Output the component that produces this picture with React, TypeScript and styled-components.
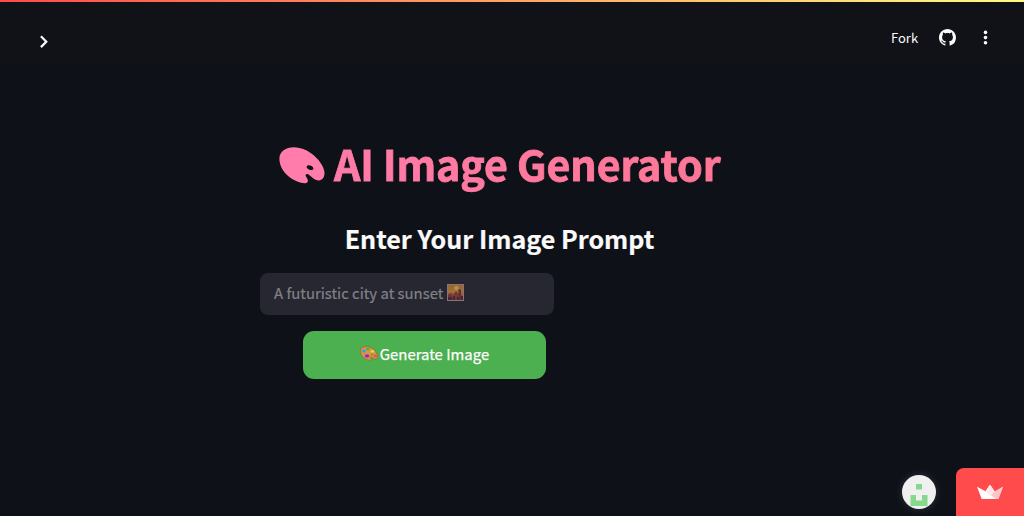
import React from "react";
import styled, { createGlobalStyle } from "styled-components";

const GlobalStyle = createGlobalStyle`
  * { box-sizing: border-box; }
  body {
    margin: 0;
    background: #0e1117;
    color: #fafafa;
    font-family: "Noto Sans CJK JP", "Noto Sans", sans-serif;
    overflow: hidden;
  }
`;

const Page = styled.div`
  display: flex;
  flex-direction: column;
  height: 516px;
`;

const Rainbow = styled.div`
  height: 2px;
  flex: none;
  background: linear-gradient(90deg, #ff4b4b, #fffd80);
`;

const Header = styled.header`
  display: flex;
  flex: none;
  justify-content: space-between;
  height: 62px;
  padding: 0 32px 0 37px;
  background: #111217;
`;

const IconButton = styled.button<{ $top: number; $size: number }>`
  display: flex;
  width: ${(p) => p.$size}px;
  height: ${(p) => p.$size}px;
  margin: ${(p) => p.$top}px 0 0;
  padding: 0;
  border: 0;
  background: none;
  color: #fafafa;
`;

const Toolbar = styled.div`
  display: flex;
`;

const ForkLink = styled.span`
  width: 48px;
  margin-top: 26px;
  font-size: 13px;
  line-height: 20px;
  white-space: nowrap;
`;

const Main = styled.main`
  display: flex;
  flex-direction: column;
  width: 480px;
  margin: 74px 0 0 260px;
`;

const Title = styled.h1`
  display: flex;
  align-items: flex-start;
  justify-content: center;
  height: 60px;
  margin: 0 0 -6px;
  font-size: 41.2px;
  line-height: 50px;
  letter-spacing: -0.1px;
  font-weight: 700;
  white-space: nowrap;
  color: transparent;
  -webkit-text-stroke: 0.9px transparent;
  background: linear-gradient(90deg, #ff7cab, #ff7695);
  background-clip: text;
  -webkit-background-clip: text;
`;

const TitleIcon = styled.svg`
  flex: none;
  margin: 9px 8.500px 0 0;
`;

const Subtitle = styled.h3`
  margin: 28px 0 0;
  height: 40px;
  font-size: 25.1px;
  line-height: 36px;
  font-weight: 700;
  text-align: center;
  white-space: nowrap;
  padding-right: 1px;
  -webkit-text-stroke: 0.2px currentColor;
`;

const PromptField = styled.div`
  display: flex;
  align-items: center;
  gap: 4px;
  width: 294px;
  height: 42px;
  margin-top: 13px;
  padding: 0 0 3px 14px;
  border-radius: 8px;
  background: #262730;
  color: #818287;
  font-size: 14.9px;
  white-space: nowrap;
  -webkit-text-stroke: 0.2px currentColor;
`;

const GenerateButton = styled.button`
  display: flex;
  align-items: center;
  justify-content: center;
  gap: 2px;
  width: 243px;
  height: 48px;
  margin: 16px 0 0 43px;
  padding: 0 0 3px;
  border: 0;
  border-radius: 11px;
  background: #4caf50;
  color: #fff;
  font-family: inherit;
  font-size: 14.9px;
  font-weight: 400;
  white-space: nowrap;
  -webkit-text-stroke: 0.25px currentColor;
`;

const Footer = styled.footer`
  display: flex;
  justify-content: flex-end;
  align-items: flex-end;
  gap: 20px;
  margin-top: auto;
`;

const Avatar = styled.div`
  width: 34px;
  height: 34px;
  margin-bottom: 7px;
  border-radius: 50%;
  overflow: hidden;
  background: #f0f0f0;
  box-shadow: 0 0 8px rgba(255, 255, 255, 0.14);
`;

const HostBadge = styled.div`
  display: flex;
  justify-content: center;
  width: 68px;
  height: 48px;
  padding-top: 16px;
  border-radius: 8px 0 0 0;
  background: #ff4b4b;
`;

const Chevron = () => (
  <svg width="14" height="14" viewBox="0 0 14 14" fill="none" stroke="currentColor" strokeWidth="2.200">
    <path d="M3.900 1.300 9.300 6.700 3.900 12.100" />
  </svg>
);

const GitHubMark = () => (
  <svg width="17" height="17" viewBox="0 0 16 16" fill="currentColor">
    <path d="M8 0C3.58 0 0 3.58 0 8c0 3.54 2.29 6.53 5.47 7.59.4.07.55-.17.55-.38 0-.19-.01-.82-.01-1.49-2.01.37-2.53-.49-2.69-.94-.09-.23-.48-.94-.82-1.13-.28-.15-.68-.52-.01-.53.63-.01 1.08.58 1.23.82.72 1.21 1.87.87 2.33.66.07-.52.28-.87.51-1.07-1.78-.2-3.64-.89-3.64-3.95 0-.87.31-1.59.82-2.15-.08-.2-.36-1.02.08-2.12 0 0 .67-.21 2.2.82.64-.18 1.32-.27 2-.27s1.36.09 2 .27c1.53-1.04 2.2-.82 2.2-.82.44 1.1.16 1.92.08 2.12.51.56.82 1.27.82 2.15 0 3.07-1.87 3.75-3.65 3.95.29.25.54.73.54 1.48 0 1.07-.01 1.93-.01 2.2 0 .21.15.46.55.38A8.01 8.01 0 0 0 16 8c0-4.42-3.58-8-8-8Z" />
  </svg>
);

const Dots = () => (
  <svg width="14" height="16" viewBox="0 0 14 16" fill="currentColor">
    <circle cx="7.500" cy="2.4" r="1.8" />
    <circle cx="7.500" cy="7.600" r="1.8" />
    <circle cx="7.500" cy="12.800" r="1.8" />
  </svg>
);

const PaletteSilhouette = () => (
  <TitleIcon width="46" height="37" viewBox="0 0 46 37">
    <path
      fill="#ff7cab"
      fillRule="evenodd"
      d="M15 .3C7 .2.6 4.5.4 11.300.2 18 3.800 25 10 29.800 15.600 34 22.500 36.600 26.500 36.200 28.500 36 29.300 34.500 28.700 32.500 28.100 30.500 26.300 29.300 26.700 28 27.100 26.700 28.700 26.800 30.500 28.300 33.500 30.800 36.500 33.800 40.300 33.400 44 33 45.700 29.500 45.500 25.500 45.200 19.500 39.500 11.500 32 6.200 26.500 2.200 20.500.4 15 .3ZM28.300 18.800C30 17.700 33.400 18.800 34.300 21 35 22.800 32.500 23.600 30.400 22.700 28 21.700 26.700 19.900 28.300 18.800Z"
    />
  </TitleIcon>
);

const Sunset = () => (
  <svg width="17" height="17" viewBox="0 0 17 17" opacity="0.6">
    <defs>
      <linearGradient id="sky" x1="0" y1="0" x2="0" y2="1">
        <stop offset="0" stopColor="#e88a2c" />
        <stop offset="0.45" stopColor="#f4a044" />
        <stop offset="1" stopColor="#a8433f" />
      </linearGradient>
    </defs>
    <rect width="17" height="17" fill="#c5aaa0" />
    <rect x="1" y="1" width="15" height="15" fill="url(#sky)" />
    <circle cx="9.500" cy="4" r="2.300" fill="#ffe05a" />
    <path d="M1 10h2V9h2v2h1.500V9H8V7.500h2v1.500h1.500V5.500H14V16H1Z" fill="#a5483d" />
    <path d="M11.500 5.500H14V16h-1.500z" fill="#8f3338" />
    <path d="M1 13h4v3H1zM6 12h2v4H6zM10 13h2v3h-2zM14 12h2v4h-2z" fill="#5e2434" />
  </svg>
);

const PaletteEmoji = () => (
  <svg width="18" height="15" viewBox="0 0 46 37">
    <path
      fill="#d99545"
      stroke="#9a602c"
      strokeWidth="1.500"
      d="M15 1C7 1 1 5 1 11.500 1 18 4 25 10 29.800 16 34 22 36 26.500 35.500 29 35 29 33 28.700 32 28 30 26.300 29 26.700 28 27 26.700 28.700 26.800 30.500 28.300 33 31 37 33 40.300 32.800 44 32 45.200 29 45 25.500 44.700 19.500 39.500 11.500 32 6.200 26.500 2.200 20.500 1 15 1Z"
    />
    <ellipse cx="20" cy="7" rx="4.500" ry="3.500" fill="#40b840" />
    <ellipse cx="10" cy="12" rx="5" ry="4" fill="#2fa4e8" />
    <ellipse cx="32" cy="13" rx="4.500" ry="3.500" fill="#f2d52e" />
    <ellipse cx="18" cy="25" rx="6" ry="4.500" fill="#8d2fc4" />
    <ellipse cx="39" cy="25" rx="4.500" ry="4" fill="#ee5548" />
    <ellipse cx="31" cy="21" rx="3" ry="2" fill="#4f8d3a" />
  </svg>
);

const Identicon = () => (
  <svg width="34" height="34" viewBox="0 0 34 34" fill="#84d98c">
    <path d="M14 9h6v5.500h-6zM8.500 20H14v5.500h6V20h5.500v11h-17z" />
  </svg>
);

const Crown = () => (
  <svg width="28" height="16" viewBox="0 0 28 16">
    <path d="M1 2.800 9.500 7.300 18.500 8 27 2.800 22.500 14.500Q22.300 15 21.700 15H6.300Q5.700 15 5.500 14.500Z" fill="#fff" />
    <path d="M9.500 7.300 13.500 1.200Q14 .6 14.500 1.200L18.700 7.200 22 15H20Z" fill="#ffd2d8" />
    <path d="M18.500 7.400 27 2.800 22.300 15H21L15 11.200Z" fill="#ffc4c8" />
    <path d="M9.500 7.300 13.500 1.200Q14 .6 14.500 1.200L18.500 7.400 15 11.200Z" fill="#ffe8eb" />
  </svg>
);

export default function App() {
  return (
    <Page>
      <GlobalStyle />
      <Rainbow />
      <Header>
        <IconButton $top={33} $size={14} aria-label="Open sidebar">
          <Chevron />
        </IconButton>
        <Toolbar>
          <ForkLink>Fork</ForkLink>
          <IconButton $top={27} $size={39} aria-label="View source">
            <GitHubMark />
          </IconButton>
          <IconButton $top={28} $size={14} aria-label="Menu">
            <Dots />
          </IconButton>
        </Toolbar>
      </Header>
      <Main>
        <Title>
          <PaletteSilhouette />
          AI Image Generator
        </Title>
        <Subtitle>Enter Your Image Prompt</Subtitle>
        <PromptField>
          <span>A futuristic city at sunset</span>
          <Sunset />
        </PromptField>
        <GenerateButton>
          <PaletteEmoji />
          <span>Generate Image</span>
        </GenerateButton>
      </Main>
      <Footer>
        <Avatar>
          <Identicon />
        </Avatar>
        <HostBadge>
          <Crown />
        </HostBadge>
      </Footer>
    </Page>
  );
}
